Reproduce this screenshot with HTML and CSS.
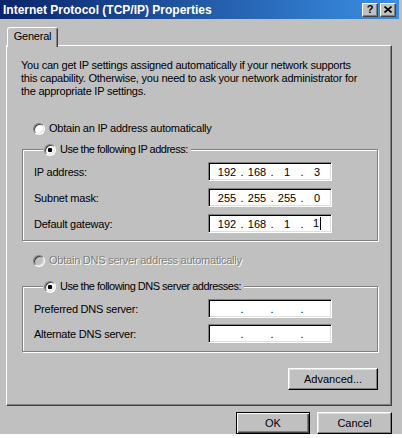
FILE: index.html
```html
<!DOCTYPE html>
<html lang="en">
<head>
    <meta charset="UTF-8">
    <title>Internet Protocol (TCP/IP) Properties</title>
    <link rel="stylesheet" href="styles.css">
</head>
<body>
    <div class="window">
        <div class="titlebar">
            <span class="title">Internet Protocol (TCP/IP) Properties</span>
            <div class="title-buttons">
                <span class="tbtn help">?</span>
                <span class="tbtn close">
                    <svg width="8" height="7" viewBox="0 0 8 7"><path d="M0.5 0.5L7.5 6.5M7.5 0.5L0.5 6.5" stroke="#000" stroke-width="1.6" fill="none"/></svg>
                </span>
            </div>
        </div>

        <div class="client">
            <div class="tabs">
                <span class="tab">General</span>
            </div>

            <div class="panel">
                <p class="intro">You can get IP settings assigned automatically if your network supports<br>this capability. Otherwise, you need to ask your network administrator for<br>the appropriate IP settings.</p>

                <label class="radio top-radio"><span class="radio-dot"></span>Obtain an IP address automatically</label>

                <fieldset class="group ip-group">
                    <legend><label class="radio"><span class="radio-dot checked"></span>Use the following IP address:</label></legend>
                    <div class="row">
                        <span class="row-label">IP address:</span>
                        <div class="ipbox"><span class="oct">192</span><span class="dot">.</span><span class="oct">168</span><span class="dot">.</span><span class="oct">1</span><span class="dot">.</span><span class="oct">3</span></div>
                    </div>
                    <div class="row">
                        <span class="row-label">Subnet mask:</span>
                        <div class="ipbox"><span class="oct">255</span><span class="dot">.</span><span class="oct">255</span><span class="dot">.</span><span class="oct">255</span><span class="dot">.</span><span class="oct">0</span></div>
                    </div>
                    <div class="row">
                        <span class="row-label">Default gateway:</span>
                        <div class="ipbox"><span class="oct">192</span><span class="dot">.</span><span class="oct">168</span><span class="dot">.</span><span class="oct">1</span><span class="dot">.</span><span class="oct">1<i class="caret"></i></span></div>
                    </div>
                </fieldset>

                <label class="radio top-radio disabled"><span class="radio-dot"></span>Obtain DNS server address automatically</label>

                <fieldset class="group dns-group">
                    <legend><label class="radio"><span class="radio-dot checked"></span>Use the following DNS server addresses:</label></legend>
                    <div class="row">
                        <span class="row-label">Preferred DNS server:</span>
                        <div class="ipbox"><span class="oct"></span><span class="dot">.</span><span class="oct"></span><span class="dot">.</span><span class="oct"></span><span class="dot">.</span><span class="oct"></span></div>
                    </div>
                    <div class="row">
                        <span class="row-label">Alternate DNS server:</span>
                        <div class="ipbox"><span class="oct"></span><span class="dot">.</span><span class="oct"></span><span class="dot">.</span><span class="oct"></span><span class="dot">.</span><span class="oct"></span></div>
                    </div>
                </fieldset>

                <div class="advanced-row">
                    <button class="btn advanced">Advanced...</button>
                </div>
            </div>

            <div class="footer">
                <button class="btn default ok">OK</button>
                <button class="btn cancel">Cancel</button>
            </div>
        </div>
    </div>
</body>
</html>
```

FILE: styles.css
```css
* {
    box-sizing: border-box;
}

body {
    margin: 0;
    background: #fff;
    font-family: "Liberation Sans", Arial, sans-serif;
    font-size: 11px;
    letter-spacing: -0.23px;
    color: #000;
}

.window {
    width: 402px;
    height: 434px;
    background: #c0c0c0;
}

/* title bar */
.titlebar {
    height: 19px;
    margin-right: 3px;
    padding: 0 3px;
    display: flex;
    align-items: center;
    justify-content: space-between;
    background: linear-gradient(to right, #0a246a, #3a8fe4);
}

.title {
    color: #fff;
    font-weight: bold;
    font-size: 12px;
    letter-spacing: 0;
}

.title-buttons {
    display: flex;
    gap: 2px;
}

.tbtn {
    width: 16px;
    height: 14px;
    display: flex;
    align-items: center;
    justify-content: center;
    background: #c0c0c0;
    border: 1px solid;
    border-color: #fff #404040 #404040 #fff;
    box-shadow: inset -1px -1px #808080;
    font-weight: bold;
    font-size: 11px;
    line-height: 1;
}

/* tabs + panel */
.client {
    padding: 8px 0 0 6px;
}

.tabs {
    display: flex;
    padding-left: 1px;
}

.tab {
    position: relative;
    z-index: 1;
    width: 51px;
    height: 20px;
    margin-bottom: -2px;
    padding-top: 2px;
    text-align: center;
    background: #c0c0c0;
    border: 1px solid;
    border-bottom: none;
    border-color: #fff #404040 transparent #fff;
    border-radius: 3px 3px 0 0;
    box-shadow: inset -1px 0 #808080;
}

.panel {
    width: 386px;
    height: 361px;
    padding-top: 13px;
    border: 1px solid;
    border-color: #fff #404040 #404040 #fff;
    box-shadow: inset -1px -1px #808080;
}

.intro {
    margin: 0 0 0 14px;
    line-height: 13px;
}

/* radios */
.radio {
    display: flex;
    align-items: center;
    gap: 4px;
    height: 13px;
    line-height: 13px;
}

.top-radio {
    margin-left: 26px;
}

.intro + .top-radio {
    margin-top: 24px;
}

.radio-dot {
    flex: 0 0 12px;
    width: 12px;
    height: 12px;
    border-radius: 50%;
    background: #fff;
    border: 1px solid;
    border-color: #808080 #fff #fff #808080;
    box-shadow: inset 1px 1px #404040, inset -1px -1px #dfdfdf;
}

.radio-dot.checked {
    background: radial-gradient(circle, #000 0, #000 2px, #fff 2.6px);
}

.disabled {
    color: #808080;
    text-shadow: 1px 1px 0 #fff;
}

.disabled .radio-dot {
    background: #c0c0c0;
}

/* group boxes */
.group {
    margin: 8px 13px 0 15px;
    padding: 6px 0 7px 11px;
    border: 1px solid #808080;
    box-shadow: 1px 1px 0 #fff, inset 1px 1px 0 #fff;
    display: flex;
    flex-direction: column;
    gap: 7px;
}

.group legend {
    margin-left: 9px;
    padding: 0 3px 0 1px;
    letter-spacing: -0.5px;
    background: #c0c0c0;
}

.disabled + .dns-group {
    margin-top: 13px;
    padding-bottom: 8px;
    gap: 6px;
}

.ip-group + .top-radio {
    margin-top: 13px;
}

.row {
    display: flex;
    align-items: center;
    height: 19px;
}

.row-label {
    flex: 0 0 174px;
}

.ipbox {
    width: 124px;
    height: 19px;
    padding-left: 7px;
    display: flex;
    align-items: center;
    letter-spacing: 0;
    background: #fff;
    border: 1px solid;
    border-color: #808080 #fff #fff #808080;
    box-shadow: inset 1px 1px #000, inset -1px -1px #dfdfdf;
}

.oct {
    width: 22px;
    text-align: center;
}

.dot {
    width: 8px;
    text-align: center;
}

.caret {
    display: inline-block;
    width: 1px;
    height: 13px;
    margin-left: 1px;
    vertical-align: -3px;
    background: #000;
}

/* buttons */
.btn {
    height: 22px;
    padding: 0;
    font: inherit;
    color: #000;
    background: #c0c0c0;
    border: 1px solid;
    border-color: #fff #000 #000 #fff;
    box-shadow: inset -1px -1px #808080, inset 1px 1px #dfdfdf;
}

.btn.default {
    border-color: #000;
    box-shadow: inset 1px 1px #fff, inset -1px -1px #404040, inset -2px -2px #808080;
}

.advanced-row {
    display: flex;
    justify-content: flex-end;
    margin: 16px 13px 0 0;
}

.advanced {
    width: 90px;
}

.footer {
    width: 386px;
    margin-top: 6px;
    display: flex;
    justify-content: flex-end;
    gap: 7px;
}

.ok {
    width: 74px;
}

.cancel {
    width: 75px;
}
```
